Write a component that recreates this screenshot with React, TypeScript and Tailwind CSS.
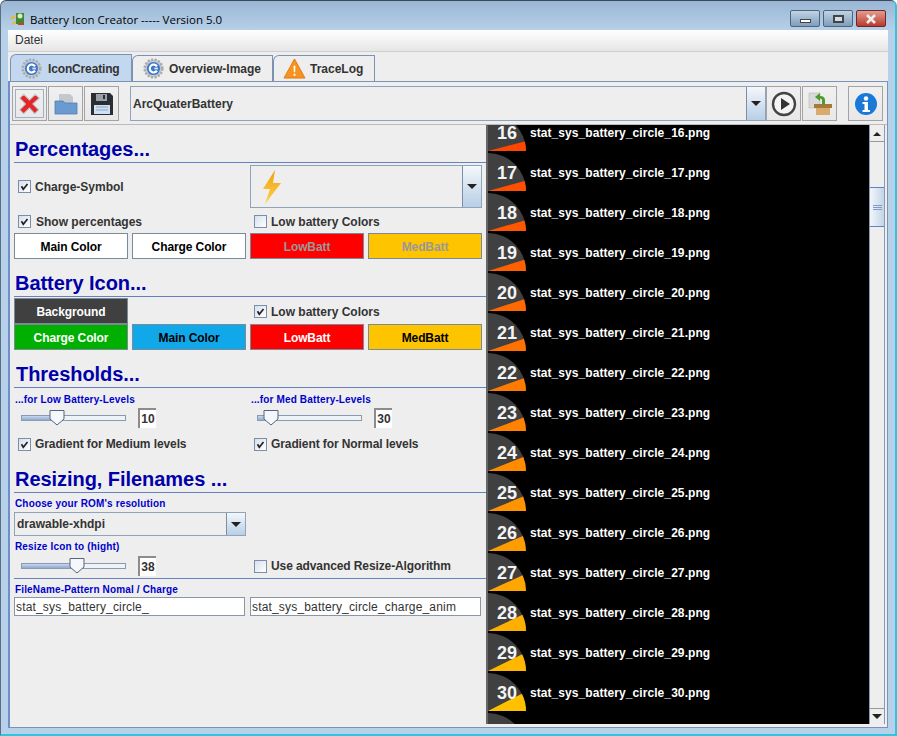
import React from "react";

const sans = "font-['Liberation_Sans',Arial,sans-serif]";

function lerpColor(n: number) {
  // low level colour runs from red at 10 to amber at 30
  const t = Math.max(0, Math.min(1, (n - 8) / 22));
  const g = Math.round(t * 192);
  return `rgb(255,${g},0)`;
}

function BatteryIcon({ level }: { level: number }) {
  const a = (level / 100) * (Math.PI / 2);
  const x = 38 * Math.cos(a);
  const y = 38 - 38 * Math.sin(a);
  return (
    <svg width="38" height="38" viewBox="0 0 38 38" className="shrink-0">
      <path d="M0 38V0A38 38 0 0 1 38 38Z" fill="#404040" />
      <path d={`M0 38L${x} ${y}A38 38 0 0 1 38 38Z`} fill={lerpColor(level)} />
      {level <= 30 && (
        <text x="19" y="26" textAnchor="middle" fill="#f4f4f4" fontSize="18" fontWeight="700" fontFamily="Liberation Sans">
          {level}
        </text>
      )}
    </svg>
  );
}

function Check({ on, label, className = "" }: { on?: boolean; label: string; className?: string }) {
  return (
    <div className={`flex items-center gap-[4px] ${className}`}>
      <div className="flex h-[13px] w-[13px] shrink-0 items-center justify-center border border-[#7c8ea5] bg-gradient-to-br from-[#d5e0ee] to-[#fff]">
        {on && (
          <svg width="9" height="9" viewBox="0 0 9 9">
            <path d="M1.5 4.2L3.3 7.2L7.5 2" fill="none" stroke="#222" strokeWidth="1.7" />
          </svg>
        )}
      </div>
      <span className="text-xs font-bold whitespace-nowrap text-[#333]">{label}</span>
    </div>
  );
}

function ColorBtn({ label, className }: { label: string; className: string }) {
  return (
    <div className={`flex h-[26px] w-[114px] items-center justify-center border border-[#7a8a99] pt-px text-xs font-bold tracking-[-0.1px] ${className}`}>
      {label}
    </div>
  );
}

function Arrow() {
  return <div className="h-0 w-0 border-x-[5px] border-t-[5px] border-x-transparent border-t-[#222]" />;
}

function ComboButton({ className = "" }: { className?: string }) {
  return (
    <div className={`flex shrink-0 items-center justify-center border-l border-[#7c8ea5] bg-gradient-to-b from-[#f4f7fb] to-[#b8cfe5] ${className}`}>
      <Arrow />
    </div>
  );
}

function Heading({ children, className = "" }: { children: React.ReactNode; className?: string }) {
  return (
    <div className={`h-[25px] border-b border-[#6382bf] pl-[1px] text-[20px] leading-[22px] font-bold tracking-[-0.05px] text-[#0000aa] ${className}`}>
      {children}
    </div>
  );
}

function Slider({ pos, value }: { pos: number; value: string }) {
  return (
    <div className="flex items-center">
      <div className="relative h-[6px] w-[105px] border border-[#8a9ab0] bg-[#eef3f8]">
        <div className="h-full bg-gradient-to-b from-[#c8d6ea] to-[#8fa9d3]" style={{ width: pos }} />
        <svg width="16" height="17" viewBox="0 0 16 17" className="absolute top-[-7px]" style={{ left: pos - 8 }}>
          <path d="M1 1.5H15V10L8 16L1 10Z" fill="#f4f7fb" stroke="#55657a" />
        </svg>
      </div>
      <div className="ml-[12px] flex h-[20px] w-[18px] items-center justify-center border-t-2 border-l-2 border-[#8c8c8c] bg-white text-xs font-bold text-[#333]">
        {value}
      </div>
    </div>
  );
}

function ToolBtn({ children, className = "" }: { children: React.ReactNode; className?: string }) {
  return (
    <div className={`flex h-[35px] w-[35px] shrink-0 items-center justify-center border border-[#a3a3a3] bg-gradient-to-b from-[#f0f0f0] to-[#e8e8e8] ${className}`}>
      {children}
    </div>
  );
}

function CogC() {
  return (
    <svg width="21" height="21" viewBox="0 0 24 24" className="shrink-0">
      <circle cx="12" cy="12" r="10" fill="#c8ccd0" stroke="#a8acb0" strokeWidth="3" strokeDasharray="2.5 1.5" />
      <circle cx="12" cy="12" r="7.5" fill="#3f78c8" />
      <path d="M16 9.5A4.5 4.5 0 1 0 16 14.5" fill="none" stroke="#fff" strokeWidth="2.4" />
      <rect x="13" y="11" width="4" height="2" fill="#dfe8f5" />
    </svg>
  );
}

function Tab({ icon, label, active, className = "" }: { icon: React.ReactNode; label: string; active?: boolean; className?: string }) {
  return (
    <div
      className={`flex items-center rounded-tl-[6px] border border-b-0 border-[#7a92b4] text-xs font-bold whitespace-nowrap text-[#333] ${active ? "h-[27px] bg-[#c3d8ef] pt-px tracking-[-0.15px]" : "h-[26px] bg-[#eee]"} ${className}`}
    >
      {icon}
      {label}
    </div>
  );
}

const rows = Array.from({ length: 16 }, (_, i) => 16 + i);

export default function App() {
  return (
    <div className={`h-[736px] w-[897px] overflow-hidden rounded-t-[6px] border-t border-r-2 border-b-2 border-l border-t-[#3a4a58] border-r-[#2cc6e0] border-b-[#2cc6e0] border-l-[#5a6f82] bg-[linear-gradient(to_bottom,#9ab6d4,#b8d1ea_30px)] ${sans}`}>
      {/* Title bar */}
      <div className="flex h-[29px] items-start pt-[9px] pr-[9px] pl-[10px]">
        <svg width="16" height="16" viewBox="0 0 16 16" className="mt-px shrink-0">
          <path d="M5 2h8v11H5z" fill="#3d8a2e" />
          <path d="M0 6l4-2v3l-4 2zM1 12l4-2v2l-4 2z" fill="#e9b82c" />
          <circle cx="9" cy="5" r="2.5" fill="#d9e8c8" />
          <path d="M7 12h6v2H7z" fill="#c8402c" />
        </svg>
        <span className="mt-[1px] ml-[3px] font-['Open_Sans',sans-serif] text-[11.5px] leading-[17px] text-black">Battery Icon Creator ----- Version 5.0</span>
        <div className="ml-auto flex gap-[3px]">
          <div className="flex h-[17px] w-[30px] items-center justify-center rounded-[2px] border border-[#4e6478] bg-gradient-to-b from-[#c0d4e6] to-[#7f9dba]">
            <div className="mt-[5px] h-[4px] w-[11px] border border-[#444] bg-white" />
          </div>
          <div className="flex h-[17px] w-[30px] items-center justify-center rounded-[2px] border border-[#4e6478] bg-gradient-to-b from-[#c0d4e6] to-[#7f9dba]">
            <div className="h-[8px] w-[11px] border-2 border-[#444] bg-[#cfdcea]" />
          </div>
          <div className="flex h-[17px] w-[30px] items-center justify-center rounded-[2px] border border-[#6b2a2a] bg-gradient-to-b from-[#e29b8f] to-[#b8392c]">
            <svg width="12" height="10" viewBox="0 0 12 10">
              <path d="M2 1l8 8M10 1L2 9" stroke="#eee" strokeWidth="2.6" />
            </svg>
          </div>
        </div>
      </div>

      {/* Client area */}
      <div className="ml-[7px] w-[880px]">
        {/* Menu */}
        <div className="flex h-[22px] items-center border-b border-[#cfcfcf] bg-gradient-to-b from-white to-[#e6e6e6] pb-[2px] pl-[7px] text-xs text-[#333]">
          Datei
        </div>

        {/* Tabs */}
        <div className="flex h-[29px] items-end bg-[#eee] pl-[2px]">
          <Tab icon={<CogC />} label="IconCreating" active className="w-[122px] gap-[6px] pl-[10px]" />
          <Tab icon={<CogC />} label="Overview-Image" className="w-[141px] gap-[5px] pl-[10px]" />
          <Tab
            icon={
              <svg width="23" height="21" viewBox="0 0 24 22" className="shrink-0">
                <path d="M12 1L23 21H1Z" fill="#f7931e" stroke="#e07a10" />
                <path d="M11 8h2l-.3 7h-1.4zM11 16.5h2v2h-2z" fill="#fff" />
              </svg>
            }
            label="TraceLog"
            className="w-[102px] gap-[4px] pl-[9px]"
          />
        </div>

        {/* Tab panel */}
        <div className="flex h-[647px] flex-col border border-l-[2px] border-[#7a92b4] border-l-[#6f8fc8] bg-[#eee]">
          {/* Toolbar */}
          <div className="flex h-[43px] shrink-0 items-start border-b border-[#bbb] pt-[4px] pr-[4px] pl-[2px]">
            <div className="flex gap-px">
              <ToolBtn>
                <div className="flex h-[29px] w-[29px] items-center justify-center border border-[#9fb0c4]">
                  <svg width="23" height="22" viewBox="2.5 2.5 17 17">
                    <path d="M3.5 6.5l3-3 4.5 4.5 4.5-4.5 3 3L13.5 11l4.5 4.5-3 3L11 14l-4.5 4.5-3-3L8 11z" fill="#e3262a" stroke="#c0c0c0" strokeWidth="0.8" strokeLinejoin="round" />
                  </svg>
                </div>
              </ToolBtn>
              <ToolBtn>
                <svg width="24" height="22" viewBox="0 0 24 22">
                  <path d="M5 1h11l3 3v8H5z" fill="#c3c8ce" />
                  <path d="M1 8h8l2 2h12v11H1z" fill="#6a9ad0" stroke="#4f7fb5" strokeWidth="0.8" />
                </svg>
              </ToolBtn>
              <ToolBtn>
                <svg width="24" height="24" viewBox="0 0 24 24">
                  <path d="M1 1h19l3 3v19H1z" fill="#2a2d33" />
                  <path d="M6 2h11v7H6z" fill="#9aa0a8" />
                  <path d="M13 3h2v4h-2z" fill="#2a2d33" />
                  <path d="M4 13h16v9H4z" fill="#cfe0f2" />
                  <path d="M6 15h12M6 18h12" stroke="#8fa6c0" />
                </svg>
              </ToolBtn>
            </div>
            <div className="ml-[11px] flex h-[35px] flex-1 border border-[#8fa3bb] bg-[#eee]">
              <div className="flex flex-1 items-center pl-[2px] text-xs font-bold text-[#333]">ArcQuaterBattery</div>
              <ComboButton className="w-[19px]" />
            </div>
            <ToolBtn>
              <svg width="26" height="26" viewBox="0 0 26 26">
                <circle cx="13" cy="13" r="11" fill="#f4f4f4" stroke="#444" strokeWidth="2.4" />
                <path d="M10 7l9 6-9 6z" fill="#333" />
              </svg>
            </ToolBtn>
            <ToolBtn className="ml-px">
              <svg width="26" height="24" viewBox="0 0 26 24">
                <path d="M2 1h11v15H2z" fill="#d9d9d9" stroke="#bbb" strokeWidth="0.6" />
                <path d="M8 14h16l-1 2v7H9v-7z" fill="#d8ab6c" />
                <path d="M7 12h18v4H7z" fill="#a8783a" />
                <path d="M18 13V8c0-2.500-2-4-5-4V1L8 5l5 4V6.500c1.500 0 2 .8 2 2V13z" fill="#4e9a2e" />
              </svg>
            </ToolBtn>
            <ToolBtn className="ml-[11px]">
              <svg width="24" height="24" viewBox="0 0 24 24">
                <circle cx="12" cy="12" r="11" fill="#1a78d8" />
                <circle cx="12" cy="6.5" r="2.2" fill="#fff" />
                <path d="M8.5 10h5.500v8h2v2H8.500v-2h2v-6h-2z" fill="#fff" />
              </svg>
            </ToolBtn>
          </div>

          <div className="flex min-h-0 flex-1">
            {/* Left column */}
            <div className="w-[476px] shrink-0 pt-[13px] pl-[4px]">
              <Heading>Percentages...</Heading>

              <div className="mt-[2px] flex h-[43px]">
                <Check on label="Charge-Symbol" className="ml-[4px] w-[232px]" />
                <div className="flex w-[232px] border border-[#8fa3bb]">
                  <div className="flex flex-1 items-center pl-[11px]">
                    <svg width="20" height="36" viewBox="0 0 20 36">
                      <defs>
                        <linearGradient id="bolt" x1="0" y1="0" x2="0" y2="1">
                          <stop offset="0" stopColor="#f0a010" />
                          <stop offset="1" stopColor="#fbd34a" />
                        </linearGradient>
                      </defs>
                      <path d="M13 1L1 20h7L3 35 19 14h-8z" fill="url(#bolt)" />
                    </svg>
                  </div>
                  <ComboButton className="w-[19px]" />
                </div>
              </div>
              <div className="mt-[2px] flex h-[23px] items-center">
                <Check on label="Show percentages" className="ml-[4px] w-[236px] gap-[5px]" />
                <Check label="Low battery Colors" />
              </div>
              <div className="flex gap-[4px]">
                <ColorBtn label="Main Color" className="bg-white text-black" />
                <ColorBtn label="Charge Color" className="bg-white text-black" />
                <ColorBtn label="LowBatt" className="bg-[#ff0000] text-[#999]" />
                <ColorBtn label="MedBatt" className="bg-[#ffc400] text-[#999]" />
              </div>

              <Heading className="mt-[13px]">Battery Icon...</Heading>
              <div className="mt-[1px] flex h-[26px] items-center">
                <ColorBtn label="Background" className="bg-[#404040] text-white" />
                <Check on label="Low battery Colors" className="ml-[126px] pt-[1px]" />
              </div>
              <div className="flex gap-[4px]">
                <ColorBtn label="Charge Color" className="bg-[#00b000] text-white" />
                <ColorBtn label="Main Color" className="bg-[#10a8e8] text-black" />
                <ColorBtn label="LowBatt" className="bg-[#ff0000] text-white" />
                <ColorBtn label="MedBatt" className="bg-[#ffc400] text-black" />
              </div>

              <Heading className="mt-[13px] pl-[2px]">Thresholds...</Heading>
              <div className="mt-[4px] flex text-[10px] font-bold tracking-[0.15px] text-[#0000cc]">
                <div className="ml-px w-[236px]">...for Low Battery-Levels</div>
                <div>...for Med Battery-Levels</div>
              </div>
              <div className="flex h-[22px] items-center pl-[7px]">
                <div className="w-[236px]"><Slider pos={35} value="10" /></div>
                <Slider pos={13} value="30" />
              </div>
              <div className="mt-[7px] flex">
                <Check on label="Gradient for Medium levels" className="ml-[4px] w-[236px] tracking-[-0.1px]" />
                <Check on label="Gradient for Normal levels" className="tracking-[-0.1px]" />
              </div>

              <Heading className="mt-[16px]">Resizing, Filenames ...</Heading>
              <div className="mt-[4px] pl-px text-[10px] leading-[14px] font-bold tracking-[0.15px] text-[#0000cc]">Choose your ROM&apos;s resolution</div>
              <div className="mt-[1px] flex h-[24px] w-[232px] border border-[#8fa3bb]">
                <div className="flex flex-1 items-center pl-[2px] text-xs font-bold text-[#333]">drawable-xhdpi</div>
                <ComboButton className="w-[19px]" />
              </div>
              <div className="mt-[3px] pl-px text-[10px] font-bold tracking-[0.15px] text-[#0000cc]">Resize Icon to (hight)</div>
              <div className="flex h-[25px] items-center border-b border-[#6382bf] pl-[7px]">
                <div className="w-[233px]"><Slider pos={55} value="38" /></div>
                <Check label="Use advanced Resize-Algorithm" className="tracking-[-0.1px]" />
              </div>
              <div className="mt-[4px] pl-px text-[10px] leading-[14px] font-bold tracking-[0.15px] text-[#0000cc]">FileName-Pattern Nomal / Charge</div>
              <div className="flex gap-[5px]">
                <div className="flex h-[19px] w-[231px] items-center border border-[#8a96a4] bg-white pl-[1px] text-xs tracking-[0.17px] text-[#333]">stat_sys_battery_circle_</div>
                <div className="flex h-[19px] w-[231px] items-center border border-[#8a96a4] bg-white pl-[1px] text-xs tracking-[0.17px] text-[#333]">stat_sys_battery_circle_charge_anim</div>
              </div>
            </div>

            {/* Preview list */}
            <div className="flex min-h-0 flex-1 pr-[2px] pb-[3px]">
              <div className="min-w-0 flex-1 overflow-hidden border-l-2 border-[#666] bg-black">
                <div className="mt-[-12px] flex flex-col gap-[2px]">
                  {rows.map((n) => (
                    <div key={n} className="flex h-[38px] items-center gap-[4px]">
                      <BatteryIcon level={n} />
                      {n <= 30 && (
                        <span className="pt-[2px] text-xs font-bold tracking-[0.07px] whitespace-nowrap text-white">stat_sys_battery_circle_{n}.png</span>
                      )}
                    </div>
                  ))}
                </div>
              </div>
              {/* Scrollbar */}
              <div className="flex w-[16px] shrink-0 flex-col border-x border-[#8a9ab0] bg-[#eee]">
                <div className="mt-px flex h-[16px] items-center justify-center border-b border-[#999]">
                  <div className="h-0 w-0 border-x-[4px] border-b-[4px] border-x-transparent border-b-[#222]" />
                </div>
                <div className="h-[45px]" />
                <div className="flex h-[40px] flex-col items-center justify-center gap-px border-y border-[#6382bf] bg-gradient-to-r from-[#f2f6fb] to-[#c3d4e8]">
                  <div className="h-px w-[9px] bg-[#7f9bc8]" />
                  <div className="h-px w-[9px] bg-[#7f9bc8]" />
                  <div className="h-px w-[9px] bg-[#7f9bc8]" />
                </div>
                <div className="flex-1" />
                <div className="flex h-[16px] items-center justify-center border-t border-[#999]">
                  <Arrow />
                </div>
              </div>
            </div>
          </div>
        </div>
      </div>
    </div>
  );
}
